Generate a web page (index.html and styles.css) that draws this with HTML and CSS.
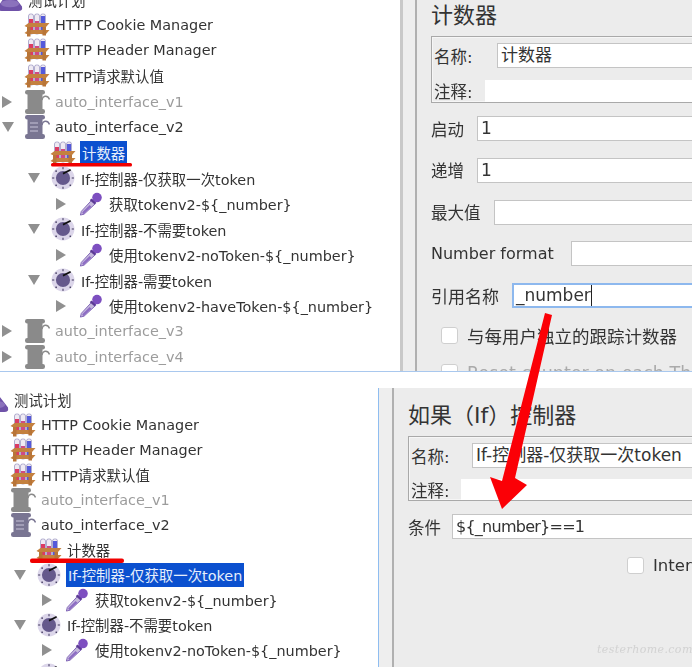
FILE: index.html
```html
<!DOCTYPE html>
<html lang="zh">
<head>
<meta charset="utf-8">
<title>JMeter 计数器</title>
<link rel="stylesheet" href="styles.css">
</head>
<body>
<svg class="defs" width="0" height="0" aria-hidden="true">
  <symbol id="rack" viewBox="0 0 26 24">
    <g stroke="#a09cc4" stroke-width="0.8" fill="#efeaf3">
      <rect x="4.5" y="1" width="5" height="20" rx="2"/>
      <rect x="10.5" y="1" width="5" height="20" rx="2"/>
      <rect x="16.5" y="1" width="5" height="20" rx="2"/>
    </g>
    <rect x="5" y="6" width="4" height="15" fill="#db3b63"/>
    <rect x="11" y="8" width="4" height="13" fill="#cf4a86"/>
    <rect x="17" y="3" width="4" height="18" fill="#5459da"/>
    <path d="M0.5 13 L4.5 10 H25.5 L22 14 H2.5 Z" fill="#c4813f"/>
    <path d="M0.5 20 L4.5 17 H25.5 L22 21 H2.5 Z" fill="#c4813f"/>
    <path d="M3 14 H6.5 V23.5 H3 Z M18.5 14 H22 V22.5 H18.5 Z" fill="#b87538"/>
  </symbol>
  <symbol id="bobbin" viewBox="0 0 26 24">
    <rect x="1" y="0" width="20" height="4.5" rx="2.2" fill="currentColor"/>
    <rect x="3.5" y="3" width="15" height="18" fill="currentColor"/>
    <rect x="1" y="19" width="20" height="5" rx="2.2" fill="currentColor"/>
    <path d="M18 10 C19 5 24 5 25.5 9.5" fill="none" stroke="currentColor" stroke-width="1.4"/>
    <path d="M6 8 H14 M6 12 H14 M6 16 H14" style="stroke: var(--spool)" stroke-width="1" fill="none"/>
  </symbol>
  <symbol id="dial" viewBox="0 0 22 22">
    <circle cx="11" cy="11" r="10.5" fill="#dcd6ea"/>
    <circle cx="11" cy="11" r="6.5" fill="#65598c"/>
    <g fill="#4a4366">
      <rect x="10.5" y="1" width="1" height="2"/>
      <rect x="10.5" y="19" width="1" height="2"/>
      <rect x="1" y="10.5" width="2" height="1"/>
      <rect x="19" y="10.5" width="2" height="1"/>
      <rect x="4" y="4" width="1.4" height="1.4"/>
      <rect x="4" y="17" width="1.4" height="1.4"/>
      <rect x="17" y="17" width="1.4" height="1.4"/>
    </g>
    <path d="M11 7 L18 3.5" stroke="#111" stroke-width="1.6"/>
  </symbol>
  <symbol id="dropper" viewBox="0 0 25 26">
    <path d="M1 25 L2 21 L14 8 L18 12 L5 24 Z" fill="#c4b8dc" stroke="#7d5fb4" stroke-width="1"/>
    <path d="M3 22 L11 14 L13 16 L4 24 Z" fill="#8d6cc4"/>
    <circle cx="19" cy="6" r="5.2" fill="#7d4fc0"/>
    <path d="M12 8 L17 12.5" stroke="#5b3a94" stroke-width="2.4"/>
  </symbol>
  <symbol id="flask" viewBox="0 0 28 26">
    <path d="M10 0 H17 V8 L27 21 Q28 26 23 26 H5 Q0 26 1 21 L10 8 Z" fill="#6f52a8"/>
    <ellipse cx="14" cy="18" rx="10" ry="4" fill="#8b72bc"/>
  </symbol>
  <symbol id="twist-right" viewBox="0 0 10 12"><path d="M0 0 L10 6 L0 12 Z" fill="#909090"/></symbol>
  <symbol id="twist-down" viewBox="0 0 12 10"><path d="M0 0 H12 L6 10 Z" fill="#909090"/></symbol>
</svg>

<main class="sheet">
  <section class="shot shot-top">
    <div class="tree tree-top">
      <div class="row root"><svg class="ico"><use href="#flask"/></svg><span>测试计划</span></div>
      <div class="row"><span class="twist"></span><svg class="ico"><use href="#rack"/></svg><span>HTTP Cookie Manager</span></div>
      <div class="row"><span class="twist"></span><svg class="ico"><use href="#rack"/></svg><span>HTTP Header Manager</span></div>
      <div class="row"><span class="twist"></span><svg class="ico"><use href="#rack"/></svg><span>HTTP请求默认值</span></div>
      <div class="row off"><span class="twist"><svg class="tw-r"><use href="#twist-right"/></svg></span><svg class="ico"><use href="#bobbin"/></svg><span>auto_interface_v1</span></div>
      <div class="row on"><span class="twist"><svg class="tw-d"><use href="#twist-down"/></svg></span><svg class="ico"><use href="#bobbin"/></svg><span>auto_interface_v2</span></div>
      <div class="row lv1"><span class="twist"></span><svg class="ico"><use href="#rack"/></svg><span class="sel">计数器</span></div>
      <div class="row lv1"><span class="twist"><svg class="tw-d"><use href="#twist-down"/></svg></span><svg class="ico"><use href="#dial"/></svg><span>If-控制器-仅获取一次token</span></div>
      <div class="row lv2"><span class="twist"><svg class="tw-r"><use href="#twist-right"/></svg></span><svg class="ico"><use href="#dropper"/></svg><span>获取tokenv2-${_number}</span></div>
      <div class="row lv1"><span class="twist"><svg class="tw-d"><use href="#twist-down"/></svg></span><svg class="ico"><use href="#dial"/></svg><span>If-控制器-不需要token</span></div>
      <div class="row lv2"><span class="twist"><svg class="tw-r"><use href="#twist-right"/></svg></span><svg class="ico"><use href="#dropper"/></svg><span>使用tokenv2-noToken-${_number}</span></div>
      <div class="row lv1"><span class="twist"><svg class="tw-d"><use href="#twist-down"/></svg></span><svg class="ico"><use href="#dial"/></svg><span>If-控制器-需要token</span></div>
      <div class="row lv2"><span class="twist"><svg class="tw-r"><use href="#twist-right"/></svg></span><svg class="ico"><use href="#dropper"/></svg><span>使用tokenv2-haveToken-${_number}</span></div>
      <div class="row off"><span class="twist"><svg class="tw-r"><use href="#twist-right"/></svg></span><svg class="ico"><use href="#bobbin"/></svg><span>auto_interface_v3</span></div>
      <div class="row off"><span class="twist"><svg class="tw-r"><use href="#twist-right"/></svg></span><svg class="ico"><use href="#bobbin"/></svg><span>auto_interface_v4</span></div>
    </div>
    <div class="gutter"></div>
    <div class="panel">
      <h2 class="title">计数器</h2>
      <div class="group">
        <div class="name-row"><span class="label name-label">名称:</span><div class="field">计数器</div></div>
        <div class="note-row"><span class="label note-label">注释:</span><div class="note"></div></div>
      </div>
      <div class="form">
        <div class="form-row"><span class="label w-start">启动</span><div class="field">1</div></div>
        <div class="form-row"><span class="label w-start">递增</span><div class="field">1</div></div>
        <div class="form-row"><span class="label w-max">最大值</span><div class="field"></div></div>
        <div class="form-row"><span class="label w-format">Number format</span><div class="field"></div></div>
        <div class="form-row"><span class="label w-ref">引用名称</span><div class="field focus"><span class="caret">_number</span></div></div>
      </div>
      <div class="checks">
        <div class="check"><span class="box"></span><span class="label">与每用户独立的跟踪计数器</span></div>
        <div class="check dim"><span class="box"></span><span class="label">Reset counter on each Thread Group Iteration</span></div>
      </div>
    </div>
  </section>

  <section class="shot shot-bottom">
    <div class="tree tree-bottom">
      <div class="row root"><svg class="ico"><use href="#flask"/></svg><span>测试计划</span></div>
      <div class="row"><span class="twist"></span><svg class="ico"><use href="#rack"/></svg><span>HTTP Cookie Manager</span></div>
      <div class="row"><span class="twist"></span><svg class="ico"><use href="#rack"/></svg><span>HTTP Header Manager</span></div>
      <div class="row"><span class="twist"></span><svg class="ico"><use href="#rack"/></svg><span>HTTP请求默认值</span></div>
      <div class="row off"><span class="twist"><svg class="tw-r"><use href="#twist-right"/></svg></span><svg class="ico"><use href="#bobbin"/></svg><span>auto_interface_v1</span></div>
      <div class="row on"><span class="twist"><svg class="tw-d"><use href="#twist-down"/></svg></span><svg class="ico"><use href="#bobbin"/></svg><span>auto_interface_v2</span></div>
      <div class="row lv1"><span class="twist"></span><svg class="ico"><use href="#rack"/></svg><span>计数器</span></div>
      <div class="row lv1"><span class="twist"><svg class="tw-d"><use href="#twist-down"/></svg></span><svg class="ico"><use href="#dial"/></svg><span class="sel">If-控制器-仅获取一次token</span></div>
      <div class="row lv2"><span class="twist"><svg class="tw-r"><use href="#twist-right"/></svg></span><svg class="ico"><use href="#dropper"/></svg><span>获取tokenv2-${_number}</span></div>
      <div class="row lv1"><span class="twist"><svg class="tw-d"><use href="#twist-down"/></svg></span><svg class="ico"><use href="#dial"/></svg><span>If-控制器-不需要token</span></div>
      <div class="row lv2"><span class="twist"><svg class="tw-r"><use href="#twist-right"/></svg></span><svg class="ico"><use href="#dropper"/></svg><span>使用tokenv2-noToken-${_number}</span></div>
      <div class="row lv1"><span class="twist"></span><svg class="ico"><use href="#dial"/></svg><span>If-控制器-需要token</span></div>
    </div>
    <div class="panel-wrap">
      <div class="gutter"></div>
      <div class="panel panel-b">
        <h2 class="title">如果（If）控制器</h2>
        <div class="group group-b">
          <div class="name-row"><span class="label name-label">名称:</span><div class="field">If-控制器-仅获取一次token</div></div>
          <div class="note-row"><span class="label note-label note-label-b">注释:</span><div class="note"></div></div>
        </div>
        <div class="form">
          <div class="form-row"><span class="label w-cond">条件</span><div class="field field-cond">${_number}==1</div></div>
        </div>
        <div class="inter"><span class="box"></span><span class="label">Interleave execution</span></div>
      </div>
    </div>
  </section>

  <svg class="marks" width="692" height="667" viewBox="0 0 692 667" aria-hidden="true">
    <rect x="51" y="163" width="81" height="3.5" rx="1.5" fill="#f00000"/>
    <rect x="30" y="558.5" width="94" height="4.5" rx="2" fill="#f00000"/>
    <path d="M545 313 L552 315 L515 478 L527 485 L502 509 L490 477 L502 481 Z" fill="#fb0006"/>
  </svg>
  <div class="watermark">testerhome.com</div>
</main>
</body>
</html>
```

FILE: styles.css
```css
* { box-sizing: border-box; }

html, body {
  margin: 0;
  padding: 0;
  background: #fff;
}

.defs { display: block; height: 0; }

.sheet {
  position: relative;
  display: flex;
  flex-direction: column;
  width: 692px;
  height: 667px;
  overflow: hidden;
  font-family: "DejaVu Sans", "Noto Sans CJK SC", sans-serif;
  color: #333;
}

.shot {
  display: flex;
  overflow: hidden;
  flex: none;
}

.shot-top {
  height: 372px;
  border-bottom: 1px solid #a9c8ee;
}

.shot-bottom {
  height: 295px;
}

.tree {
  flex: none;
  font-size: 14.4px;
  filter: blur(0.45px);
  --spool: #c8c4d8;
}

.tree-top {
  --row: 25.54px;
  width: 400px;
  margin-top: -13.4px;
}

.tree-bottom {
  --row: 25px;
  width: 392px;
  margin-left: -14px;
  padding-top: 15px;
}

.row {
  display: flex;
  align-items: center;
  height: var(--row);
  padding-left: 2px;
  white-space: nowrap;
}

.row.root { padding-left: 0; margin-left: -3px; }
.row.lv1 { padding-left: 28px; }
.row.lv2 { padding-left: 56px; }

.row.off { color: #9c9c9c; --spool: transparent; }
.row.off .ico { color: #8a8a8a; }
.row.on .ico { color: #797592; }

.twist {
  display: flex;
  align-items: center;
  flex: none;
  width: 22px;
}

.tw-r { width: 10px; height: 12px; }
.tw-d { width: 12px; height: 10px; }

.ico {
  flex: none;
  width: 26px;
  height: 24px;
  margin-right: 5px;
  overflow: visible;
}

.sel {
  display: flex;
  align-items: center;
  height: 24px;
  margin-left: -1px;
  padding: 0 2px;
  background: #0b50cf;
  color: #e6eefb;
}

.gutter {
  flex: none;
  width: 15px;
  border-left: 3px solid #c9c9c9;
  background: #eee;
}

.panel-wrap {
  display: flex;
  flex: 1;
  min-width: 0;
  margin-top: 16px;
  border-left: 1px solid #8fbdf0;
}

.panel-wrap .gutter {
  width: 13px;
  border-left: 0;
}

.panel {
  flex: 1;
  min-width: 0;
  border-left: 2px solid #b0b0b0;
  background: #ececec;
  padding-left: 14px;
  filter: blur(0.4px);
  font-size: 16px;
}

.panel-b { padding-top: 12px; }

.title {
  margin: 0;
  height: 36px;
  font-size: 22px;
  font-weight: 400;
  line-height: 32px;
  white-space: nowrap;
}

.group {
  height: 67px;
  margin-right: -20px;
  padding: 6px 0 0 2px;
  border: 1px solid #a9a9a9;
  box-shadow: inset 0 0 0 1px #f6f6f6;
}

.group-b { height: 65px; }
.group-b .name-label { width: 61px; }
.group-b .note-row { height: 21px; margin-top: 11px; }
.group-b .note { height: 21px; }

.name-row {
  display: flex;
  align-items: center;
  height: 25px;
}

.note-row {
  display: flex;
  align-items: center;
  height: 22px;
  margin-top: 12px;
}

.label {
  flex: none;
  white-space: nowrap;
  font-size: 16.5px;
}

.name-label { width: 63px; }
.note-label { width: 51px; }
.note-label-b { width: 50px; }

.note {
  flex: 1;
  height: 22px;
  background: #fff;
}

.field {
  flex: 1;
  min-width: 0;
  height: 25px;
  padding-left: 3px;
  background: #fff;
  border: 1px solid #c4c4c4;
  line-height: 23px;
  font-size: 17px;
  white-space: nowrap;
  overflow: hidden;
}

.field.focus {
  border: 2px solid #8db8ee;
  line-height: 21px;
  padding-left: 2px;
}

.field-cond {
  font-size: 16px;
  letter-spacing: -0.75px;
}

.caret {
  display: inline-block;
  height: 21px;
  border-right: 1px solid #222;
}

.form {
  display: flex;
  flex-direction: column;
  gap: 16.75px;
  margin-top: 13px;
  margin-right: -20px;
}

.form-row {
  display: flex;
  align-items: center;
  height: 25px;
}

.w-start { width: 46px; }
.w-max { width: 63px; }
.w-format { width: 140px; font-size: 16px; }
.w-ref { width: 81px; font-size: 17px; }
.w-cond { width: 44px; }

.checks {
  display: flex;
  flex-direction: column;
  gap: 20px;
  margin-top: 19px;
  padding-left: 10px;
}

.check {
  display: flex;
  align-items: center;
  height: 17px;
  gap: 9px;
}

.check .label { font-size: 17.5px; }
.check.dim .label { color: #aaa; }

.box {
  flex: none;
  width: 17px;
  height: 17px;
  background: #fff;
  border: 1px solid #cfcfcf;
  border-radius: 3px;
}

.inter {
  display: flex;
  align-items: center;
  gap: 9px;
  height: 17px;
  margin-top: 18px;
  padding-left: 219px;
}

.marks {
  position: absolute;
  left: 0;
  top: 0;
}

.watermark {
  position: absolute;
  left: 597px;
  top: 643px;
  font-family: "DejaVu Serif", serif;
  font-style: italic;
  font-size: 11px;
  letter-spacing: 0.4px;
  color: #d2d2d2;
  white-space: nowrap;
}
```
